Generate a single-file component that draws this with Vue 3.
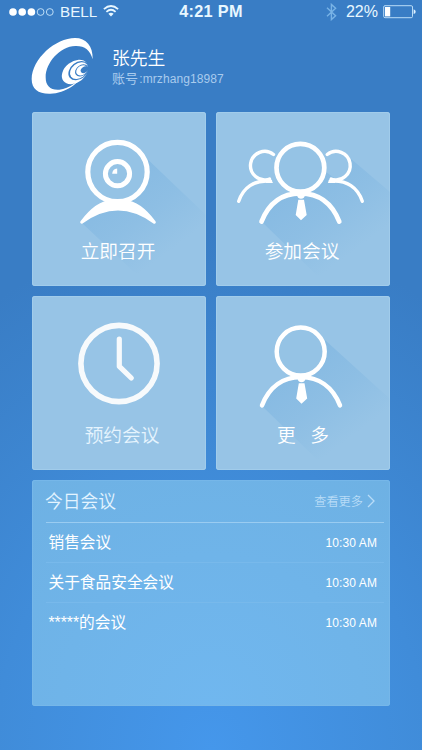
<script setup>
import { ref } from 'vue';

const user = ref({ name: '张先生', account: 'mrzhang18987' });

const tiles = [
  { icon: 'camera', label: '立即召开' },
  { icon: 'group', label: '参加会议' },
  { icon: 'schedule', label: '预约会议' },
  { icon: 'person', label: '更 多' },
];

const meetings = ref([
  { title: '销售会议', time: '10:30 AM' },
  { title: '关于食品安全会议', time: '10:30 AM' },
  { title: '*****的会议', time: '10:30 AM' },
]);
</script>

<template>
  <div class="screen">
    <header class="status">
      <div class="status-left">
        <svg class="signal" width="46" height="10" viewBox="0 0 46 10">
          <g fill="#fff">
            <circle cx="4" cy="5" r="3.8" />
            <circle cx="13.2" cy="5" r="3.8" />
            <circle cx="22.4" cy="5" r="3.8" />
          </g>
          <g fill="none" stroke="#c9e6fa" stroke-width="0.9">
            <circle cx="31.6" cy="5" r="3.4" />
            <circle cx="40.8" cy="5" r="3.4" />
          </g>
        </svg>
        <span class="carrier">BELL</span>
        <svg class="wifi" width="16" height="12" viewBox="0 0 16 12">
          <g fill="none" stroke="#e8f7ff" stroke-width="1.8">
            <path d="M0.9 4.2Q8 -2.1 15.1 4.2" />
            <path d="M3.4 6.8Q8 2.7 12.6 6.8" />
          </g>
          <path d="M5.4 8.8Q8 6.6 10.6 8.8L8 11.5Z" fill="#e8f7ff" />
        </svg>
      </div>
      <div class="clock">4:21 PM</div>
      <div class="status-right">
        <svg class="bluetooth" width="11" height="18" viewBox="0 0 11 18">
          <path d="M1 4.8L9.6 12.8L5.4 16.6V1.4L9.6 5.2L1 13.2" fill="none" stroke="#78b3e6" stroke-width="1.4" />
        </svg>
        <span class="percent">22%</span>
        <svg class="battery" width="33" height="14" viewBox="0 0 33 14">
          <rect x="0.7" y="0.7" width="28.8" height="12" rx="1.3" fill="none" stroke="#b9dcf7" stroke-width="1" />
          <rect x="2" y="2" width="5.2" height="9.4" fill="#fff" />
          <path d="M30.6 4.3Q32.7 5 32.7 6.7T30.6 9.1Z" fill="#dff1ff" />
        </svg>
      </div>
    </header>

    <section class="profile">
      <svg class="logo" width="75" height="70" viewBox="0 0 225 210">
        <path
          fill="#fff"
          d="M203 88C204 48 184 24 150 24C92 24 21 86 20 147C20 178 40 192 76 191C120 190 166 159 186 119C163 153 133 176 103 179C77 181 62 169 62 142C62 98 105 49 151 48C178 47 196 60 203 88Z"
        />
        <!-- nested crescents meeting at the right -->
        <ellipse cx="150" cy="126" rx="44" ry="31" transform="rotate(-38 150 126)" fill="#fff" />
        <ellipse cx="161" cy="122" rx="34" ry="25" transform="rotate(-38 161 122)" fill="#397dc5" />
        <ellipse cx="162" cy="122" rx="30" ry="21.5" transform="rotate(-38 162 122)" fill="#fff" />
        <ellipse cx="170" cy="121" rx="22" ry="16" transform="rotate(-38 170 121)" fill="#397dc5" />
        <ellipse cx="170" cy="121" rx="18" ry="13.5" transform="rotate(-38 170 121)" fill="#fff" />
        <ellipse cx="178" cy="119" rx="12" ry="8.5" transform="rotate(-38 178 119)" fill="#397dc5" />
      </svg>
      <div class="who">
        <div class="name">{{ user.name }}</div>
        <div class="account"><span>账号</span>:{{ user.account }}</div>
      </div>
    </section>

    <nav class="tiles">
      <div v-for="tile in tiles" :key="tile.icon" class="tile" :class="tile.icon">
        <svg class="tile-icon" width="174" height="120" viewBox="0 0 174 120">
          <defs>
            <linearGradient :id="'fade-' + tile.icon" gradientUnits="userSpaceOnUse" x1="80" y1="70" x2="134" y2="142">
              <stop offset="0" stop-color="#7cb4e0" stop-opacity="0.6" />
              <stop offset="0.5" stop-color="#7cb4e0" stop-opacity="0.36" />
              <stop offset="1" stop-color="#7cb4e0" stop-opacity="0" />
            </linearGradient>
          </defs>

          <template v-if="tile.icon === 'camera'">
            <path d="M108 40L174 103V174H117L50 111Q64 98 86 94Q118 84 108 40Z" fill="url(#fade-camera)" />
            <circle cx="85.5" cy="60" r="29.7" fill="#95c3e5" stroke="#fff" stroke-width="5.2" />
            <circle cx="85.5" cy="61.7" r="12.1" fill="none" stroke="#fff" stroke-width="5" />
            <path d="M80.2 61.8Q80.4 57.2 85.2 56.6V61.8Z" fill="#fff" />
            <path
              d="M49.7 110.2Q64.5 90.5 79 89.6H93Q107.5 90.5 122.3 110.2Q104 97 86 97T49.7 110.2Z"
              fill="#fff" stroke="#fff" stroke-width="3" stroke-linejoin="round"
            />
          </template>

          <template v-else-if="tile.icon === 'group'">
            <path d="M134 46L174 80V174H112L47 111Q58 85 85 82Q107 77 110 60L121 68Q139 61 134 46Z" fill="url(#fade-group)" />
            <g fill="none" stroke="#fff" stroke-width="3.4" stroke-linecap="round">
              <path d="M57.5 42.5A14.2 14.2 0 1 0 53.5 67" />
              <path d="M22.7 89.3C27 76 38 67.5 54.5 69.2" />
              <path d="M111.2 42.5A14.2 14.2 0 1 1 115.2 67" />
              <path d="M146.3 89.3C142 76 131 67.5 114.2 69.2" />
            </g>
            <path d="M50 66.6L54.5 66.4L57 71H50ZM119 66.6L114.3 66.4L111.8 71H119Z" fill="#fff" />
            <g fill="none" stroke="#fff" stroke-width="4.7" stroke-linecap="round">
              <circle cx="84.4" cy="55.7" r="23.9" fill="#95c3e5" />
              <path d="M45.5 109.6C53 90.5 67 81.3 84.4 81.3S115.8 90.5 123.3 109.6" />
            </g>
            <path d="M81 83H89Q88.6 86.7 85 86.7T81 83ZM82.3 87.8H88L90.7 103L85 108.2L79.7 103Z" fill="#fff" />
          </template>

          <template v-else-if="tile.icon === 'schedule'">
            <circle cx="87" cy="67.5" r="38.1" fill="none" stroke="#f7fafc" stroke-width="5.6" />
            <path
              d="M87.3 43.2V70.4L99.3 82"
              fill="none" stroke="#f7fafc" stroke-width="5.2" stroke-linecap="round" stroke-linejoin="round"
            />
          </template>

          <template v-else>
            <path d="M109 44L174 103V174H112L47 111Q58 85 85 82Q109 76 109 44Z" fill="url(#fade-person)" />
            <g fill="none" stroke="#fff" stroke-width="4.5" stroke-linecap="round">
              <circle cx="84.7" cy="55.6" r="24" fill="#95c3e5" />
              <path d="M46 109.3C53.5 90.5 67.4 81 84.8 81S116.5 90.5 124 109.3" />
            </g>
            <path d="M81.5 82.6H89.5Q89 86.3 85.5 86.3T81.5 82.6ZM82.8 87.3H88.5L91.2 102.5L85.5 107.8L80.2 102.5Z" fill="#fff" />
          </template>
        </svg>
        <span class="label">{{ tile.label }}</span>
      </div>
    </nav>

    <section class="panel">
      <div class="panel-head">
        <h2>今日会议</h2>
        <a class="more">
          查看更多
          <svg width="8" height="14" viewBox="0 0 8 14">
            <path d="M1 1L7 7L1 13" fill="none" stroke="#b8dcf7" stroke-width="1.3" />
          </svg>
        </a>
      </div>
      <div v-for="(meeting, i) in meetings" :key="i" class="row">
        <span class="title">{{ meeting.title }}</span>
        <span class="time">{{ meeting.time }}</span>
      </div>
    </section>
  </div>
</template>

<style>
body {
  margin: 0;
  background: #397dc5;
}
</style>

<style scoped>
.screen {
  box-sizing: border-box;
  width: 422px;
  height: 750px;
  overflow: hidden;
  color: #fff;
  font-family: "Liberation Sans", "Noto Sans CJK SC", sans-serif;
  background: radial-gradient(ellipse 430px 520px at 50% 100%, #4597eb 0%, #408cd9 50%, #397dc5 100%);
}

.status {
  display: grid;
  grid-template-columns: 1fr auto 1fr;
  align-items: center;
  height: 23px;
  padding: 0 6px 0 9px;
  color: #e8f7ff;
}

.status-left,
.status-right {
  display: flex;
  align-items: center;
}

.status-right {
  justify-content: flex-end;
}

.carrier {
  margin-left: 5px;
  font-size: 15.2px;
  line-height: 23px;
}

.wifi {
  margin-left: 6px;
  margin-bottom: 1px;
}

.clock {
  margin-left: -3px;
  font-size: 16.3px;
  font-weight: bold;
  line-height: 23px;
  letter-spacing: 0.3px;
}

.percent {
  margin: 0 5px 0 9px;
  font-size: 16px;
}

.profile {
  display: flex;
  height: 89px;
  padding-left: 25px;
}

.logo {
  margin-top: 7px;
}

.who {
  padding: 24px 0 0 12px;
}

.name {
  font-size: 17.8px;
  font-weight: 350;
  line-height: 24px;
}

.account {
  color: #a9cbed;
  font-size: 12px;
  line-height: 16px;
  letter-spacing: 0.1px;
}

.account span {
  font-size: 13px;
  margin-right: 1px;
}

.tiles {
  display: grid;
  grid-template-columns: 174px 174px;
  grid-auto-rows: 174px;
  gap: 9.5px 10px;
  padding-left: 32px;
}

.tile {
  overflow: hidden;
  border-radius: 3px;
  background: #97c4e6;
  box-shadow: inset 0 0 0 1px #a1cceb;
  text-align: center;
}

.tile-icon {
  display: block;
  overflow: visible;
}

.label {
  position: relative;
  display: block;
  padding-right: 2px;
  font-size: 18.7px;
  font-weight: 350;
  line-height: 40px;
}

.schedule .label {
  padding: 0 0 0 6px;
  color: #e6f4fe;
}

.person .label {
  padding: 0;
  word-spacing: 9.5px;
}

.panel {
  box-sizing: border-box;
  width: 358px;
  height: 226px;
  margin: 10.5px 0 0 32px;
  padding: 0 6px 0 14px;
  border-radius: 3px;
  background: radial-gradient(ellipse 300px 300px at 50% 100%, #70b7ef, #6eb1e3);
  box-shadow: inset 0 0 0 1px #76b7e9;
}

.panel-head,
.row {
  box-sizing: border-box;
  display: flex;
  justify-content: space-between;
  align-items: center;
  height: 40px;
  border-bottom: 1px solid #78b9eb;
}

.panel-head {
  height: 43px;
  border-bottom-color: #9accf1;
}

.panel-head h2 {
  margin: -3px 0 0 -1px;
  color: #e4f4ff;
  font-size: 17.8px;
  font-weight: 350;
}

.more {
  display: flex;
  align-items: center;
  gap: 4px;
  padding-right: 9px;
  color: #b8dcf7;
  font-size: 12.2px;
  font-weight: 350;
}

.row {
  padding: 0 7px 0 2.5px;
}

.row:last-child {
  border-bottom: 0;
}

.title {
  margin-top: -2px;
  font-size: 15.7px;
  font-weight: 400;
}

.row:last-child .title {
  margin-top: -4px;
}

.time {
  font-size: 12px;
  letter-spacing: 0.1px;
}
</style>
